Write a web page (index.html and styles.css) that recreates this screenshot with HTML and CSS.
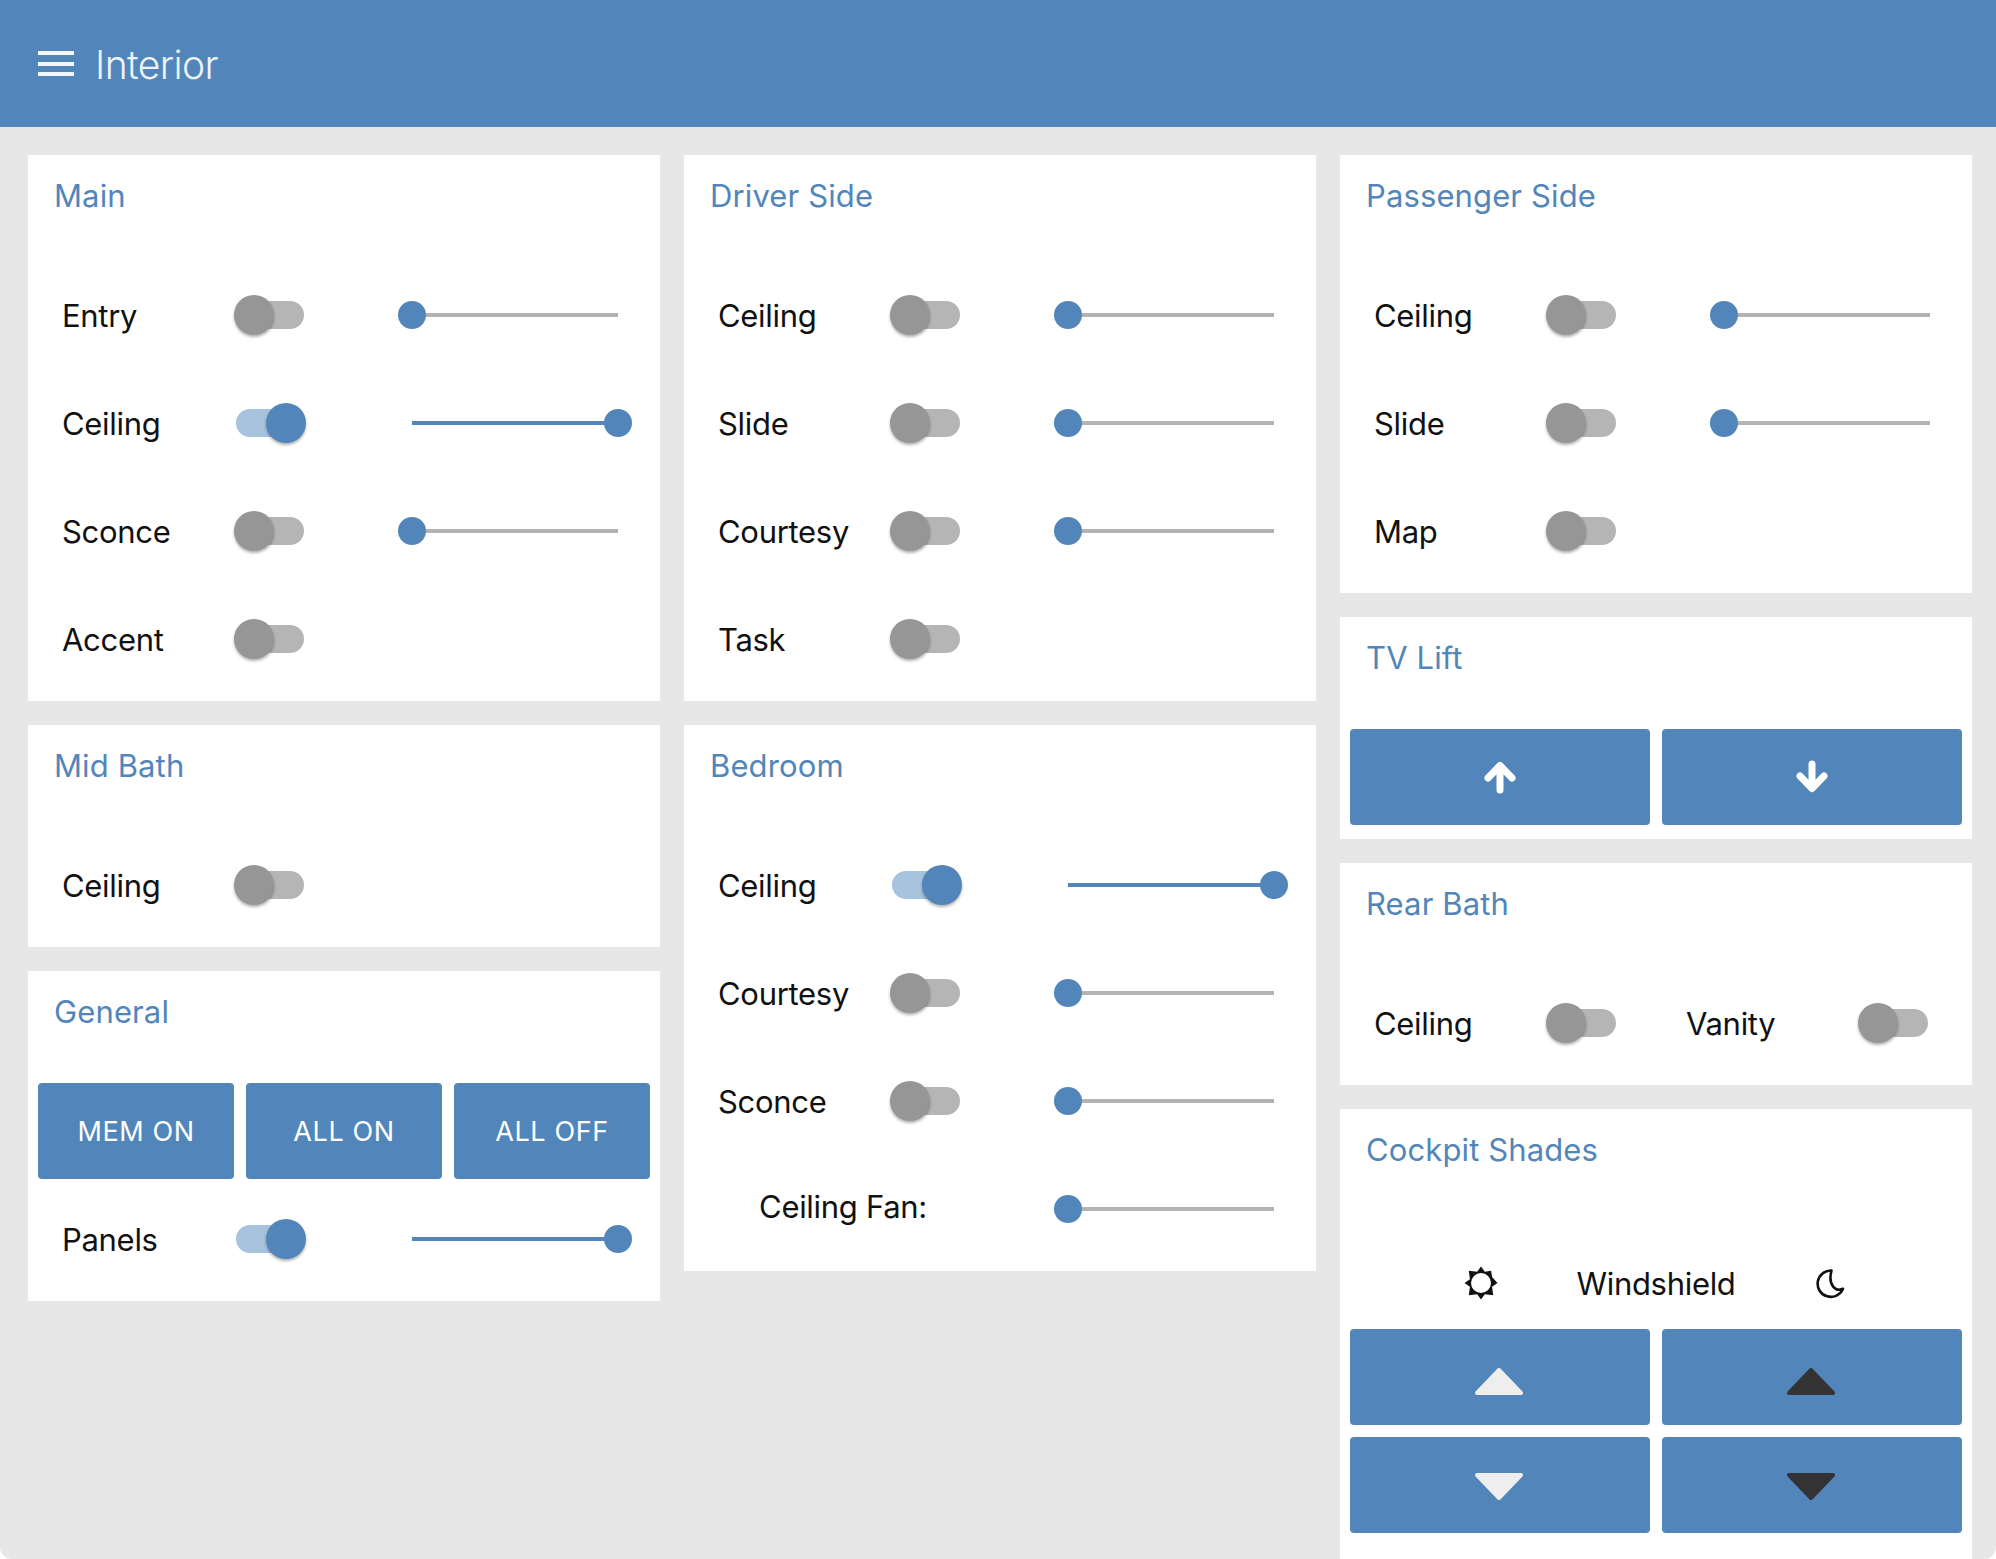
FILE: index.html
```html
<!DOCTYPE html>
<html lang="en">
<head>
<meta charset="utf-8">
<title>Interior</title>
<link rel="stylesheet" href="styles.css">
</head>
<body>
<div class="app">
  <header class="topbar">
    <div class="burger"><span></span><span></span><span></span></div>
    <h1 class="topbar-title">Interior</h1>
  </header>
  <main class="board">
    <div class="column">
      <section class="card">
        <h2 class="card-title">Main</h2>
        <div class="row"><span class="label">Entry</span><span class="toggle"><i></i></span><span class="slider"><i></i></span></div>
        <div class="row"><span class="label">Ceiling</span><span class="toggle on"><i></i></span><span class="slider on"><i></i></span></div>
        <div class="row"><span class="label">Sconce</span><span class="toggle"><i></i></span><span class="slider"><i></i></span></div>
        <div class="row"><span class="label">Accent</span><span class="toggle"><i></i></span></div>
      </section>
      <section class="card">
        <h2 class="card-title">Mid Bath</h2>
        <div class="row"><span class="label">Ceiling</span><span class="toggle"><i></i></span></div>
      </section>
      <section class="card">
        <h2 class="card-title">General</h2>
        <div class="buttons three">
          <button class="btn">MEM ON</button>
          <button class="btn">ALL ON</button>
          <button class="btn">ALL OFF</button>
        </div>
        <div class="row"><span class="label">Panels</span><span class="toggle on"><i></i></span><span class="slider on"><i></i></span></div>
      </section>
    </div>
    <div class="column">
      <section class="card">
        <h2 class="card-title">Driver Side</h2>
        <div class="row"><span class="label">Ceiling</span><span class="toggle"><i></i></span><span class="slider"><i></i></span></div>
        <div class="row"><span class="label">Slide</span><span class="toggle"><i></i></span><span class="slider"><i></i></span></div>
        <div class="row"><span class="label">Courtesy</span><span class="toggle"><i></i></span><span class="slider"><i></i></span></div>
        <div class="row"><span class="label">Task</span><span class="toggle"><i></i></span></div>
      </section>
      <section class="card">
        <h2 class="card-title">Bedroom</h2>
        <div class="row"><span class="label">Ceiling</span><span class="toggle on"><i></i></span><span class="slider on"><i></i></span></div>
        <div class="row"><span class="label">Courtesy</span><span class="toggle"><i></i></span><span class="slider"><i></i></span></div>
        <div class="row"><span class="label">Sconce</span><span class="toggle"><i></i></span><span class="slider"><i></i></span></div>
        <div class="row"><span class="label wide">Ceiling Fan:</span><span class="slider"><i></i></span></div>
      </section>
    </div>
    <div class="column">
      <section class="card">
        <h2 class="card-title">Passenger Side</h2>
        <div class="row"><span class="label">Ceiling</span><span class="toggle"><i></i></span><span class="slider"><i></i></span></div>
        <div class="row"><span class="label">Slide</span><span class="toggle"><i></i></span><span class="slider"><i></i></span></div>
        <div class="row"><span class="label">Map</span><span class="toggle"><i></i></span></div>
      </section>
      <section class="card">
        <h2 class="card-title">TV Lift</h2>
        <div class="buttons two">
          <button class="btn" aria-label="Up"><svg class="arrow" viewBox="0 0 34 34"><path d="M17 30V6M5 18 17 5.500l12 12.500"/></svg></button>
          <button class="btn" aria-label="Down"><svg class="arrow" viewBox="0 0 34 34"><path d="M17 4V28M5 16l12 12.500 12-12.500"/></svg></button>
        </div>
      </section>
      <section class="card">
        <h2 class="card-title">Rear Bath</h2>
        <div class="row split">
          <div class="cell"><span class="label">Ceiling</span><span class="toggle"><i></i></span></div>
          <div class="cell"><span class="label">Vanity</span><span class="toggle"><i></i></span></div>
        </div>
      </section>
      <section class="card last">
        <h2 class="card-title">Cockpit Shades</h2>
        <div class="shade-head">
          <svg class="sun" viewBox="0 0 32 32"><path fill-rule="evenodd" d="M16 .5 19.600 5.400 25.500 4.500 26.400 10.400 31.500 16 26.400 19.600 27.500 27.500 19.600 26.600 16 31.500 12.400 26.600 4.500 27.500 5.600 19.600 .5 16 5.600 12.400 4.500 4.500 12.400 5.400ZM16 6.600a9.400 9.400 0 1 0 0 18.800 9.400 9.400 0 1 0 0-18.800Z"/></svg>
          <span class="shade-name">Windshield</span>
          <svg class="moon" viewBox="2 -1 34 34"><path d="M19.500 3.500A13.200 13.200 0 1 0 31 21.800C24 25 15.500 19 19.500 3.500Z"/></svg>
        </div>
        <div class="buttons two">
          <button class="btn" aria-label="Raise light shade"><svg class="tri light" viewBox="0 0 48 27"><path d="M24 2 46 25H2Z"/></svg></button>
          <button class="btn" aria-label="Raise dark shade"><svg class="tri dark" viewBox="0 0 48 27"><path d="M24 2 46 25H2Z"/></svg></button>
        </div>
        <div class="buttons two">
          <button class="btn" aria-label="Lower light shade"><svg class="tri light flip" viewBox="0 0 48 27"><path d="M24 25 46 2H2Z"/></svg></button>
          <button class="btn" aria-label="Lower dark shade"><svg class="tri dark flip" viewBox="0 0 48 27"><path d="M24 25 46 2H2Z"/></svg></button>
        </div>
      </section>
    </div>
  </main>
</div>
</body>
</html>
```
FILE: styles.css
```css
* { box-sizing: border-box; }
html, body { margin: 0; height: 100%; background: #fff; }
body { overflow: hidden; font-family: Inter, "Liberation Sans", sans-serif; color: #111; }
.app { height: 100%; display: flex; flex-direction: column; background: #e7e7e7; border-bottom-left-radius: 12px; border-bottom-right-radius: 12px; overflow: hidden; }
.topbar { flex: 0 0 127px; background: #5286ba; display: flex; align-items: center; padding-left: 38px; gap: 21px; }
.burger { width: 36px; display: flex; flex-direction: column; gap: 6.500px; }
.burger span { display: block; height: 4px; background: #f2f5f9; }
.topbar-title { margin: 0; padding-top: 2px; font-size: 39px; font-weight: 300; letter-spacing: -0.600px; color: #eef3f8; }
.board { flex: 1; display: flex; gap: 24px; padding: 28px 24px 0 28px; min-height: 0; align-items: flex-start; }
.column { flex: 0 0 632px; min-width: 0; display: flex; flex-direction: column; gap: 24px; }
.card { background: #fff; padding-bottom: 8px; }
.card.last { padding-bottom: 60px; }
.card-title { margin: 0; height: 106px; padding: 19px 0 0 26px; font-size: 31px; line-height: 43px; font-weight: 400; letter-spacing: 0.120px; color: #5286ba; }
.row { height: 108px; display: flex; align-items: center; padding: 0 28px 0 34px; }
.label { flex: 0 0 172px; font-size: 31px; letter-spacing: -0.300px; color: #111; }
.label.wide { flex: 0 0 250px; text-align: center; padding-bottom: 5px; }
.toggle { flex: 0 0 72px; height: 40px; position: relative; }
.toggle::before { content: ""; position: absolute; left: 2px; top: 6px; width: 68px; height: 28px; border-radius: 14px; background: #b5b5b5; }
.toggle i { position: absolute; left: 0; top: 0; width: 40px; height: 40px; border-radius: 50%; background: #969696; box-shadow: 0 2px 3px rgba(0,0,0,.3); }
.toggle.on::before { background: #a8c3dd; }
.toggle.on i { left: 32px; background: #5286ba; }
.slider { margin-left: auto; flex: 0 0 234px; height: 28px; position: relative; }
.slider::before { content: ""; position: absolute; left: 14px; right: 14px; top: 12px; height: 4px; background: #b3b3b3; }
.slider i { position: absolute; left: 0; top: 0; width: 28px; height: 28px; border-radius: 50%; background: #5286ba; }
.slider.on::before { background: #5286ba; }
.slider.on i { left: 206px; }
.split { padding-right: 0; }
.cell { flex: 0 0 auto; display: flex; align-items: center; }
.cell + .cell { margin-left: 68px; }
.buttons { height: 108px; display: grid; gap: 12px; padding: 6px 10px; }
.buttons.three { grid-template-columns: repeat(3, 1fr); }
.buttons.two { grid-template-columns: repeat(2, 1fr); }
.btn { border: 0; margin: 0; padding: 0; height: 96px; border-radius: 4px; background: #5286ba; color: #fff; font: 400 27px Inter, "Liberation Sans", sans-serif; letter-spacing: 0.600px; display: flex; align-items: center; justify-content: center; }
.arrow { width: 34px; height: 34px; fill: none; stroke: #fff; stroke-width: 7; stroke-linecap: round; stroke-linejoin: round; }
.tri { width: 48px; height: 27px; margin: 8px 2px 0 0; stroke-width: 4; stroke-linejoin: round; }
.tri.flip { margin-top: 2px; }
.tri.light { fill: #eee; stroke: #eee; }
.tri.dark { fill: #333; stroke: #333; }
.shade-head { height: 108px; display: flex; align-items: center; justify-content: center; gap: 78px; padding-top: 28px; }
.shade-name { font-size: 31px; letter-spacing: -0.300px; color: #111; }
.sun { width: 34px; height: 34px; fill: #111; }
.moon { width: 34px; height: 34px; fill: none; stroke: #111; stroke-width: 2.600; stroke-linejoin: round; }
```
